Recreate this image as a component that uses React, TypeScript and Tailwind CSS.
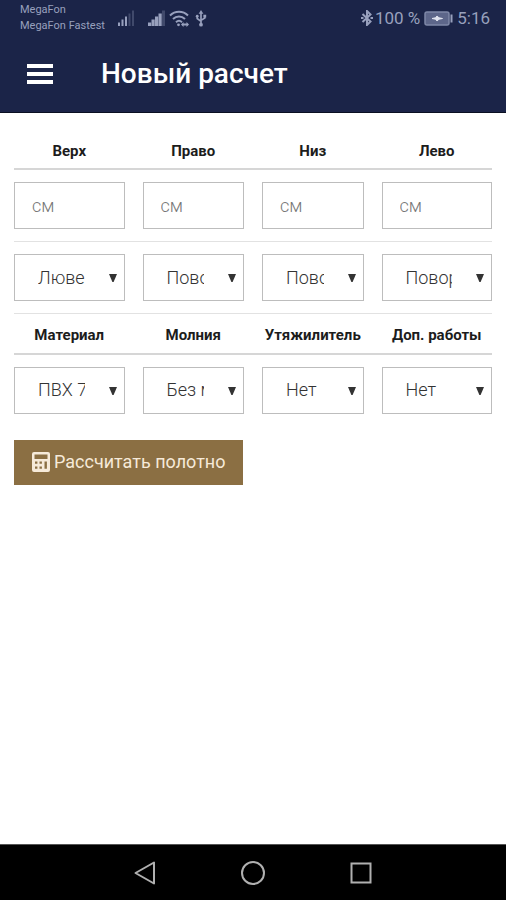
const edges = [
  { id: "top", title: "Верх", mount: "Люверсы" },
  { id: "right", title: "Право", mount: "Поворотные" },
  { id: "bottom", title: "Низ", mount: "Поворотные" },
  { id: "left", title: "Лево", mount: "Поворотные" },
];

const extras = [
  { id: "material", title: "Материал", value: "ПВХ 700" },
  { id: "zipper", title: "Молния", value: "Без молнии" },
  { id: "weight", title: "Утяжилитель", value: "Нет" },
  { id: "works", title: "Доп. работы", value: "Нет" },
];

const headCell =
  "h-10 border-b-2 border-[#d6d6d6] px-[9px] pt-1 pb-0 first:pl-0 last:pr-0 text-center text-[15px] leading-5 font-bold whitespace-nowrap text-[#1c1c1c]";
const cell = "px-[9px] py-3 first:pl-0 last:pr-0";

function Select({ label, value }: { label: string; value: string }) {
  return (
    <div className="relative">
      <select
        aria-label={label}
        className="block h-[47px] w-full appearance-none border border-[#bdbdbd] bg-white pr-[39px] pl-[23px] text-lg font-light text-[#333]"
      >
        <option>{value}</option>
      </select>
      <svg
        viewBox="0 0 8 8"
        className="pointer-events-none absolute top-5 right-2 h-2 w-2 fill-[#333]"
      >
        <path d="M0 0h8L4.600 8H3.400z" />
      </svg>
    </div>
  );
}

function Signal({ bars, barWidth }: { bars: number; barWidth: number }) {
  return (
    <svg viewBox="0 0 17 16" className="h-4 w-[17px] fill-current">
      {[0, 1, 2, 3, 4].map((i) => (
        <rect
          key={i}
          x={i * 3.5}
          y={12.5 - i * 3}
          width={barWidth}
          height={3.5 + i * 3}
          opacity={i < bars ? 1 : 0.3}
        />
      ))}
    </svg>
  );
}

function StatusBar() {
  return (
    <div className="flex h-9 items-center pr-4 pl-5 text-[#98a0bd]">
      <div className="text-[11px] leading-4">
        <div>MegaFon</div>
        <div>MegaFon Fastest</div>
      </div>
      <div className="ml-[13px] flex items-center gap-[13px]">
        <Signal bars={3} barWidth={2} />
        <Signal bars={4} barWidth={3.2} />
      </div>
      <svg
        viewBox="0 0 20 17"
        className="ml-1 h-[17px] w-5 fill-none stroke-current stroke-2"
      >
        <path d="M1 5.500C6 .5 14 .5 19 5.500M4 9c3.500-3.500 8.500-3.500 12 0M7 12.200c1.800-1.700 4.200-1.700 6 0" />
        <circle cx="9.500" cy="14.800" r="1.400" className="fill-current stroke-none" />
        <path d="M12 14.500l2.500-2.500v5zM20 14.500l-2.500-2.500v5z" className="fill-current stroke-none" />
        <path d="M14 14.500h4" />
      </svg>
      <svg
        viewBox="0 0 12 18"
        className="ml-1.5 h-[17px] w-3 fill-none stroke-current stroke-[1.8]"
      >
        <path d="M6 3v12M2 6.500V9l4 3M10 6.500V8.500L6 11" />
        <path d="M6 0l2.500 4h-5z" className="fill-current stroke-none" />
        <circle cx="6" cy="15.500" r="2" className="fill-current stroke-none" />
        <circle cx="2" cy="6.500" r="1.500" className="fill-current stroke-none" />
        <path d="M8.500 5h3v3h-3z" className="fill-current stroke-none" />
      </svg>
      <div className="ml-auto flex items-center text-[17px] leading-6">
        <svg
          viewBox="0 0 12 16"
          className="h-4 w-3 fill-none stroke-current stroke-2"
        >
          <path d="M1.500 4l8 7.500L6 15V1l3.500 3.500-8 7.500M0 8h2.500M9.500 8H12" />
        </svg>
        <span className="ml-0.5">100 %</span>
        <svg viewBox="0 0 29 15" className="ml-1 h-[15px] w-[29px]">
          <rect
            x="1"
            y="1"
            width="24"
            height="13"
            rx="2"
            className="fill-[#5d668a] stroke-[#7f88a8] stroke-[1.5]"
          />
          <path d="M27.500 3.500v8" className="stroke-current stroke-2" />
          <path d="M8 7.500l3.500-.7L13 5l2 1.800 3.500.7-3.500.7L13 10l-1.500-1.800z" className="fill-[#dfe2ee] stroke-[#dfe2ee]" />
        </svg>
        <span className="ml-1">5:16</span>
      </div>
    </div>
  );
}

export default function App() {
  return (
    <div className="flex min-h-screen flex-col bg-white font-['Roboto',sans-serif]">
      <header className="border-b border-[#0b1022] bg-[#1b2448]">
        <StatusBar />
        <div className="flex h-[76px] items-center px-[27px]">
          <button aria-label="Меню" className="flex flex-col gap-1">
            <span className="h-1 w-[26px] bg-white" />
            <span className="h-1 w-[26px] bg-white" />
            <span className="h-1 w-[26px] bg-white" />
          </button>
          <h1 className="ml-12 text-[28px] leading-8 font-medium text-white">
            Новый расчет
          </h1>
        </div>
      </header>

      <main className="grow px-[14px] pt-4">
        <table className="w-full table-fixed border-collapse">
          <thead>
            <tr>
              {edges.map((edge) => (
                <th key={edge.id} className={headCell}>
                  {edge.title}
                </th>
              ))}
            </tr>
          </thead>
          <tbody>
            <tr className="border-b border-[#e2e2e2]">
              {edges.map((edge) => (
                <td key={edge.id} className={cell}>
                  <input
                    type="text"
                    aria-label={edge.title}
                    placeholder="см"
                    className="block h-[47px] w-full border border-[#bdbdbd] px-[17px] text-lg font-light placeholder:text-[#777]"
                  />
                </td>
              ))}
            </tr>
            <tr className="border-b border-[#e2e2e2]">
              {edges.map((edge) => (
                <td key={edge.id} className={cell}>
                  <Select label={edge.title} value={edge.mount} />
                </td>
              ))}
            </tr>
            <tr>
              {extras.map((extra) => (
                <th key={extra.id} className={headCell}>
                  {extra.title}
                </th>
              ))}
            </tr>
            <tr>
              {extras.map((extra) => (
                <td key={extra.id} className={cell}>
                  <Select label={extra.title} value={extra.value} />
                </td>
              ))}
            </tr>
          </tbody>
        </table>

        <button className="mt-[14px] flex h-[45px] items-center gap-1 bg-[#8b6f43] px-[18px] text-lg text-[#f6ead9]">
          <svg viewBox="0 0 18 20" className="h-5 w-[18px]">
            <path
              fillRule="evenodd"
              className="fill-current"
              d="M2 0h14a2 2 0 0 1 2 2v16a2 2 0 0 1-2 2H2a2 2 0 0 1-2-2V2a2 2 0 0 1 2-2zM2.500 2.500v4.500h13V2.500zM3 9.500v2.200h2.400V9.500zM7.500 9.500v2.200h2.400V9.500zM3 14.500v2.200h2.400v-2.200zM7.500 14.500v2.200h2.400v-2.200zM12.500 9.500v7.200h2.400v-7.200z"
            />
          </svg>
          Рассчитать полотно
        </button>
      </main>

      <nav className="flex h-14 items-center justify-center gap-[84px] border-t border-[#555] bg-black">
        <button aria-label="Назад">
          <svg viewBox="0 0 24 24" className="h-6 w-6 fill-none stroke-[#b0b0b0] stroke-2">
            <path d="M21 1.500v21L2.500 12z" strokeLinejoin="round" />
          </svg>
        </button>
        <button aria-label="Домой">
          <svg viewBox="0 0 24 24" className="h-6 w-6 fill-none stroke-[#b0b0b0] stroke-2">
            <circle cx="12" cy="12" r="11" />
          </svg>
        </button>
        <button aria-label="Недавние">
          <svg viewBox="0 0 24 24" className="h-6 w-6 fill-none stroke-[#b0b0b0] stroke-2">
            <rect x="2.500" y="2.500" width="19" height="19" />
          </svg>
        </button>
      </nav>
    </div>
  );
}
